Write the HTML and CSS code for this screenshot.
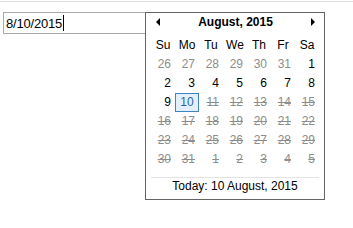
FILE: index.html
```html
<!DOCTYPE html>
<html lang="en">
<head>
    <meta charset="UTF-8">
    <title>Date Picker</title>
    <link rel="stylesheet" href="styles.css">
</head>
<body>
    <div class="topline"></div>
    <div class="picker">
        <div class="field"><span class="value">8/10/2015</span><span class="caret"></span></div>
        <div class="calendar">
            <div class="cal-head">
                <span class="arrow prev"></span>
                <span class="title">August, 2015</span>
                <span class="arrow next"></span>
            </div>
            <div class="weekdays">
                <span>Su</span><span>Mo</span><span>Tu</span><span>We</span><span>Th</span><span>Fr</span><span>Sa</span>
            </div>
            <div class="days">
                <span class="other">26</span><span class="other">27</span><span class="other">28</span><span class="other">29</span><span class="other">30</span><span class="other">31</span><span>1</span>
                <span>2</span><span>3</span><span>4</span><span>5</span><span>6</span><span>7</span><span>8</span>
                <span>9</span><span class="selected">10</span><span class="off">11</span><span class="off">12</span><span class="off">13</span><span class="off">14</span><span class="off">15</span>
                <span class="off">16</span><span class="off">17</span><span class="off">18</span><span class="off">19</span><span class="off">20</span><span class="off">21</span><span class="off">22</span>
                <span class="off">23</span><span class="off">24</span><span class="off">25</span><span class="off">26</span><span class="off">27</span><span class="off">28</span><span class="off">29</span>
                <span class="off">30</span><span class="off">31</span><span class="off">1</span><span class="off">2</span><span class="off">3</span><span class="off">4</span><span class="off">5</span>
            </div>
            <div class="sep"></div>
            <div class="today">Today: 10 August, 2015</div>
        </div>
    </div>
</body>
</html>
```

FILE: styles.css
```css
body {
    margin: 0;
    background: #fff;
    font-family: 'Liberation Sans', Arial, sans-serif;
    font-size: 12px;
    color: #000;
}
.topline {
    margin-top: 1px;
    height: 1px;
    background: #dcdcdc;
}
.picker {
    display: flex;
    align-items: flex-start;
    margin-top: 10px;
    padding-left: 3px;
}
.field {
    box-sizing: border-box;
    width: 142px;
    height: 22px;
    border: 1px solid #a9a9a9;
    border-right: none;
    padding-left: 2px;
    display: flex;
    align-items: center;
    font-size: 13px;
    letter-spacing: -0.2px;
}
.caret {
    display: inline-block;
    width: 1px;
    height: 16px;
    margin-left: 1px;
    background: #000;
}
.calendar {
    box-sizing: border-box;
    width: 180px;
    border: 1px solid #646464;
    background: #fff;
    padding: 0 5px 5px 5px;
}
.cal-head {
    display: flex;
    align-items: center;
    padding: 2px 0 7px 0;
    line-height: 14px;
}
.title {
    flex: 1;
    text-align: center;
    font-weight: bold;
}
.arrow {
    width: 0;
    height: 0;
    border-top: 4px solid transparent;
    border-bottom: 4px solid transparent;
}
.arrow.prev {
    margin-left: 5px;
    border-right: 4px solid #000;
}
.arrow.next {
    margin-right: 4px;
    border-left: 4px solid #000;
}
.weekdays,
.days {
    display: grid;
    grid-template-columns: repeat(7, 24px);
    grid-auto-rows: 19px;
    line-height: 19px;
}
.weekdays span {
    text-align: center;
}
.days span {
    box-sizing: border-box;
    text-align: right;
    padding-right: 4px;
}
.days .other {
    color: #8d8d8d;
}
.days .off {
    color: #8d8d8d;
    text-decoration: line-through;
}
.days .selected {
    text-align: center;
    padding-right: 0;
    line-height: 17px;
    border: 1px solid #3d85bf;
    background: #e3f0fb;
    color: #2a64a0;
}
.sep {
    margin-top: 8px;
    height: 1px;
    background: #e4e4e4;
}
.today {
    line-height: 16px;
    text-align: center;
}
```
